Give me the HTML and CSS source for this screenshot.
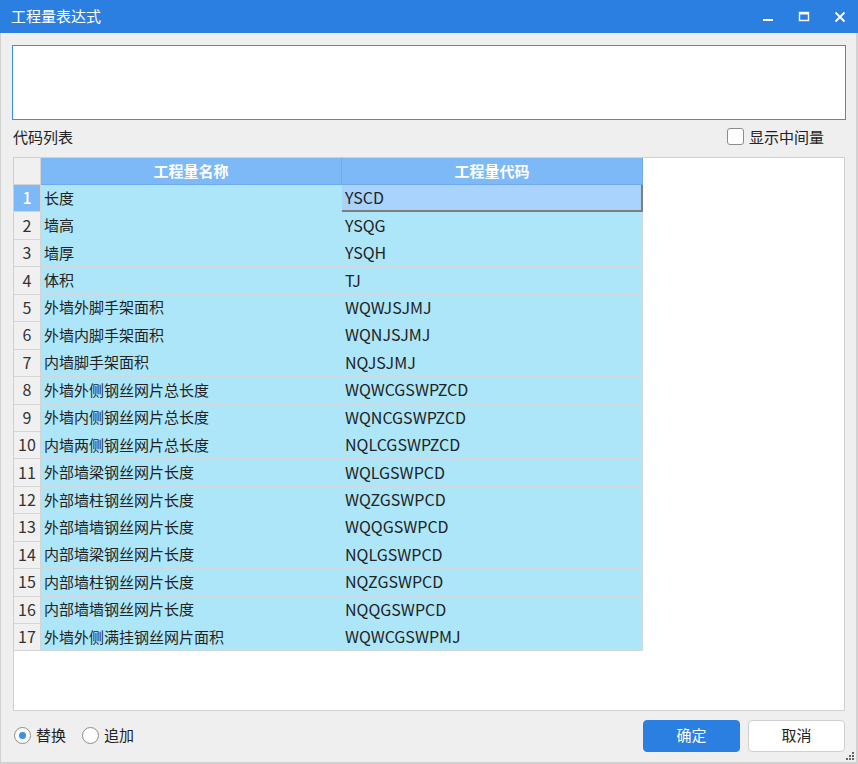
FILE: index.html
```html
<!DOCTYPE html>
<html lang="zh">
<head>
<meta charset="utf-8">
<title>工程量表达式</title>
<link rel="stylesheet" href="styles.css">
</head>
<body>
<div class="window">
  <div class="titlebar">
    <span class="title">工程量表达式</span>
    <div class="controls">
      <svg class="ctl" width="14" height="14" viewBox="0 0 14 14"><rect x="2" y="9" width="10" height="2" fill="#fff"/></svg>
      <svg class="ctl" width="14" height="14" viewBox="0 0 14 14"><rect x="2.5" y="2.5" width="9" height="8" fill="none" stroke="#fff" stroke-width="1.4"/><rect x="2" y="2" width="10" height="2.5" fill="#fff"/></svg>
      <svg class="ctl" width="14" height="14" viewBox="0 0 14 14"><path d="M2.5 2.5 L11.5 11.5 M11.5 2.5 L2.5 11.5" stroke="#fff" stroke-width="1.8"/></svg>
    </div>
  </div>
  <div class="content">
    <div class="expr"></div>
    <div class="labelrow">
      <span class="label">代码列表</span>
      <label class="check"><span class="box"></span><span>显示中间量</span></label>
    </div>
    <div class="gridbox">
      <div class="grid">
        <div class="corner"></div>
        <div class="hcell">工程量名称</div>
        <div class="hcell">工程量代码</div>

        <div class="rh sel">1</div><div class="c">长度</div><div class="c code focus">YSCD</div>
        <div class="rh">2</div><div class="c">墙高</div><div class="c code">YSQG</div>
        <div class="rh">3</div><div class="c">墙厚</div><div class="c code">YSQH</div>
        <div class="rh">4</div><div class="c">体积</div><div class="c code">TJ</div>
        <div class="rh">5</div><div class="c">外墙外脚手架面积</div><div class="c code">WQWJSJMJ</div>
        <div class="rh">6</div><div class="c">外墙内脚手架面积</div><div class="c code">WQNJSJMJ</div>
        <div class="rh">7</div><div class="c">内墙脚手架面积</div><div class="c code">NQJSJMJ</div>
        <div class="rh">8</div><div class="c">外墙外侧钢丝网片总长度</div><div class="c code">WQWCGSWPZCD</div>
        <div class="rh">9</div><div class="c">外墙内侧钢丝网片总长度</div><div class="c code">WQNCGSWPZCD</div>
        <div class="rh">10</div><div class="c">内墙两侧钢丝网片总长度</div><div class="c code">NQLCGSWPZCD</div>
        <div class="rh">11</div><div class="c">外部墙梁钢丝网片长度</div><div class="c code">WQLGSWPCD</div>
        <div class="rh">12</div><div class="c">外部墙柱钢丝网片长度</div><div class="c code">WQZGSWPCD</div>
        <div class="rh">13</div><div class="c">外部墙墙钢丝网片长度</div><div class="c code">WQQGSWPCD</div>
        <div class="rh">14</div><div class="c">内部墙梁钢丝网片长度</div><div class="c code">NQLGSWPCD</div>
        <div class="rh">15</div><div class="c">内部墙柱钢丝网片长度</div><div class="c code">NQZGSWPCD</div>
        <div class="rh">16</div><div class="c">内部墙墙钢丝网片长度</div><div class="c code">NQQGSWPCD</div>
        <div class="rh">17</div><div class="c">外墙外侧满挂钢丝网片面积</div><div class="c code">WQWCGSWPMJ</div>
      </div>
    </div>
    <div class="bottom">
      <div class="radios">
        <label class="radio"><span class="dot on"></span><span>替换</span></label>
        <label class="radio"><span class="dot"></span><span>追加</span></label>
      </div>
      <div class="buttons">
        <button class="btn primary">确定</button>
        <button class="btn">取消</button>
      </div>
    </div>
  </div>
  <svg class="grip" width="10" height="10" viewBox="0 0 10 10">
    <rect x="7" y="1" width="2" height="2" fill="#666"/>
    <rect x="4" y="4" width="2" height="2" fill="#666"/>
    <rect x="7" y="4" width="2" height="2" fill="#666"/>
    <rect x="1" y="7" width="2" height="2" fill="#666"/>
    <rect x="4" y="7" width="2" height="2" fill="#666"/>
    <rect x="7" y="7" width="2" height="2" fill="#666"/>
  </svg>
</div>
</body>
</html>
```

FILE: styles.css
```css
* { box-sizing: border-box; }
html, body { margin: 0; padding: 0; }
body {
  width: 858px;
  height: 764px;
  background: #efefef;
  font-family: "Noto Sans CJK SC", "Noto Sans", sans-serif;
  font-size: 15px;
  color: #222;
  overflow: hidden;
}
.window {
  position: relative;
  width: 858px;
  height: 764px;
  border-left: 1px solid #d2d2d2;
  border-right: 2px solid #d2d2d2;
  border-bottom: 2px solid #d2d2d2;
  display: flex;
  flex-direction: column;
}
.titlebar {
  height: 33px;
  background: #2b7fe0;
  display: flex;
  align-items: center;
  justify-content: space-between;
  padding-left: 11px;
  padding-bottom: 2px;
  margin-left: -1px;
  margin-right: -2px;
  flex: none;
}
.title { color: #fff; font-size: 15px; }
.controls { display: flex; align-items: center; gap: 22px; padding-right: 11px; padding-top: 2px; }
.ctl { display: block; }
.content {
  flex: 1;
  display: flex;
  flex-direction: column;
  padding: 12px 10px 0 11px;
}
.expr {
  height: 75px;
  background: #fff;
  border: 1px solid #3b8ce6;
  flex: none;
}
.labelrow {
  height: 37px;
  display: flex;
  align-items: center;
  justify-content: space-between;
  padding-bottom: 4px;
  flex: none;
}
.label { padding-left: 1px; }
.check { display: flex; align-items: center; gap: 5px; margin-right: 22px; }
.box {
  width: 17px; height: 17px;
  border: 1px solid #8c8c8c;
  border-radius: 3px;
  background: #fff;
}
.gridbox {
  height: 554px;
  background: #fff;
  border: 1px solid #d0d0d0;
  flex: none;
  margin-left: 1px;
  margin-right: 1px;
}
.grid {
  display: grid;
  grid-template-columns: 27px 301px 301px;
  grid-template-rows: 27px repeat(17, 27.44px);
}
.corner {
  background: #f0f0f0;
  border-right: 1px solid #d4d4d4;
  border-bottom: 1px solid #d4d4d4;
}
.hcell {
  background: #7db8f7;
  color: #fff;
  font-weight: bold;
  display: flex;
  align-items: center;
  justify-content: center;
  padding-bottom: 2px;
  border-right: 1px solid #6faaf0;
  border-bottom: 1px solid #6faaf0;
}
.rh {
  background: #f0f0f0;
  color: #333;
  display: flex;
  align-items: center;
  justify-content: center;
  font-size: 16px;
  padding-bottom: 2px;
  border-right: 1px solid #d4d4d4;
  border-bottom: 1px solid #d4d4d4;
}
.rh.sel { background: #7db8f7; color: #fff; font-weight: 500; }
.c {
  background: #aee6f9;
  display: flex;
  align-items: center;
  padding-left: 3px;
  padding-bottom: 2px;
  border-right: 1px solid #cfd8dc;
  border-bottom: 1px solid #cfd8dc;
  white-space: nowrap;
}
.c.code { padding-left: 3px; font-size: 16px; }
.c.focus {
  background: #a9d3fc;
  border-right: 2px solid #7d7d7d;
  border-bottom: 2px solid #7d7d7d;
}
.bottom {
  flex: 1;
  display: flex;
  align-items: center;
  justify-content: space-between;
  padding-bottom: 2px;
}
.radios { display: flex; align-items: center; gap: 16px; padding-left: 2px; }
.radio { display: flex; align-items: center; gap: 5px; }
.radio span:last-child { padding-bottom: 2px; }
.dot {
  width: 17px; height: 17px;
  border-radius: 50%;
  border: 1px solid #8c8c8c;
  background: #fff;
  position: relative;
}
.dot.on::after {
  content: "";
  position: absolute;
  left: 4px; top: 4px;
  width: 7px; height: 7px;
  border-radius: 50%;
  background: #3d8ee8;
}
.buttons { display: flex; gap: 8px; margin-right: 1px; }
.btn {
  width: 97px;
  height: 32px;
  border-radius: 4px;
  border: 1px solid #d0d0d0;
  background: #fff;
  font-family: "Noto Sans CJK SC", "Noto Sans", sans-serif;
  font-size: 15px;
  color: #222;
  padding: 0 0 2px 0;
}
.btn.primary { background: #2b7fe0; border-color: #2b7fe0; color: #fff; }
.grip { position: absolute; right: 1px; bottom: 1px; }
```
